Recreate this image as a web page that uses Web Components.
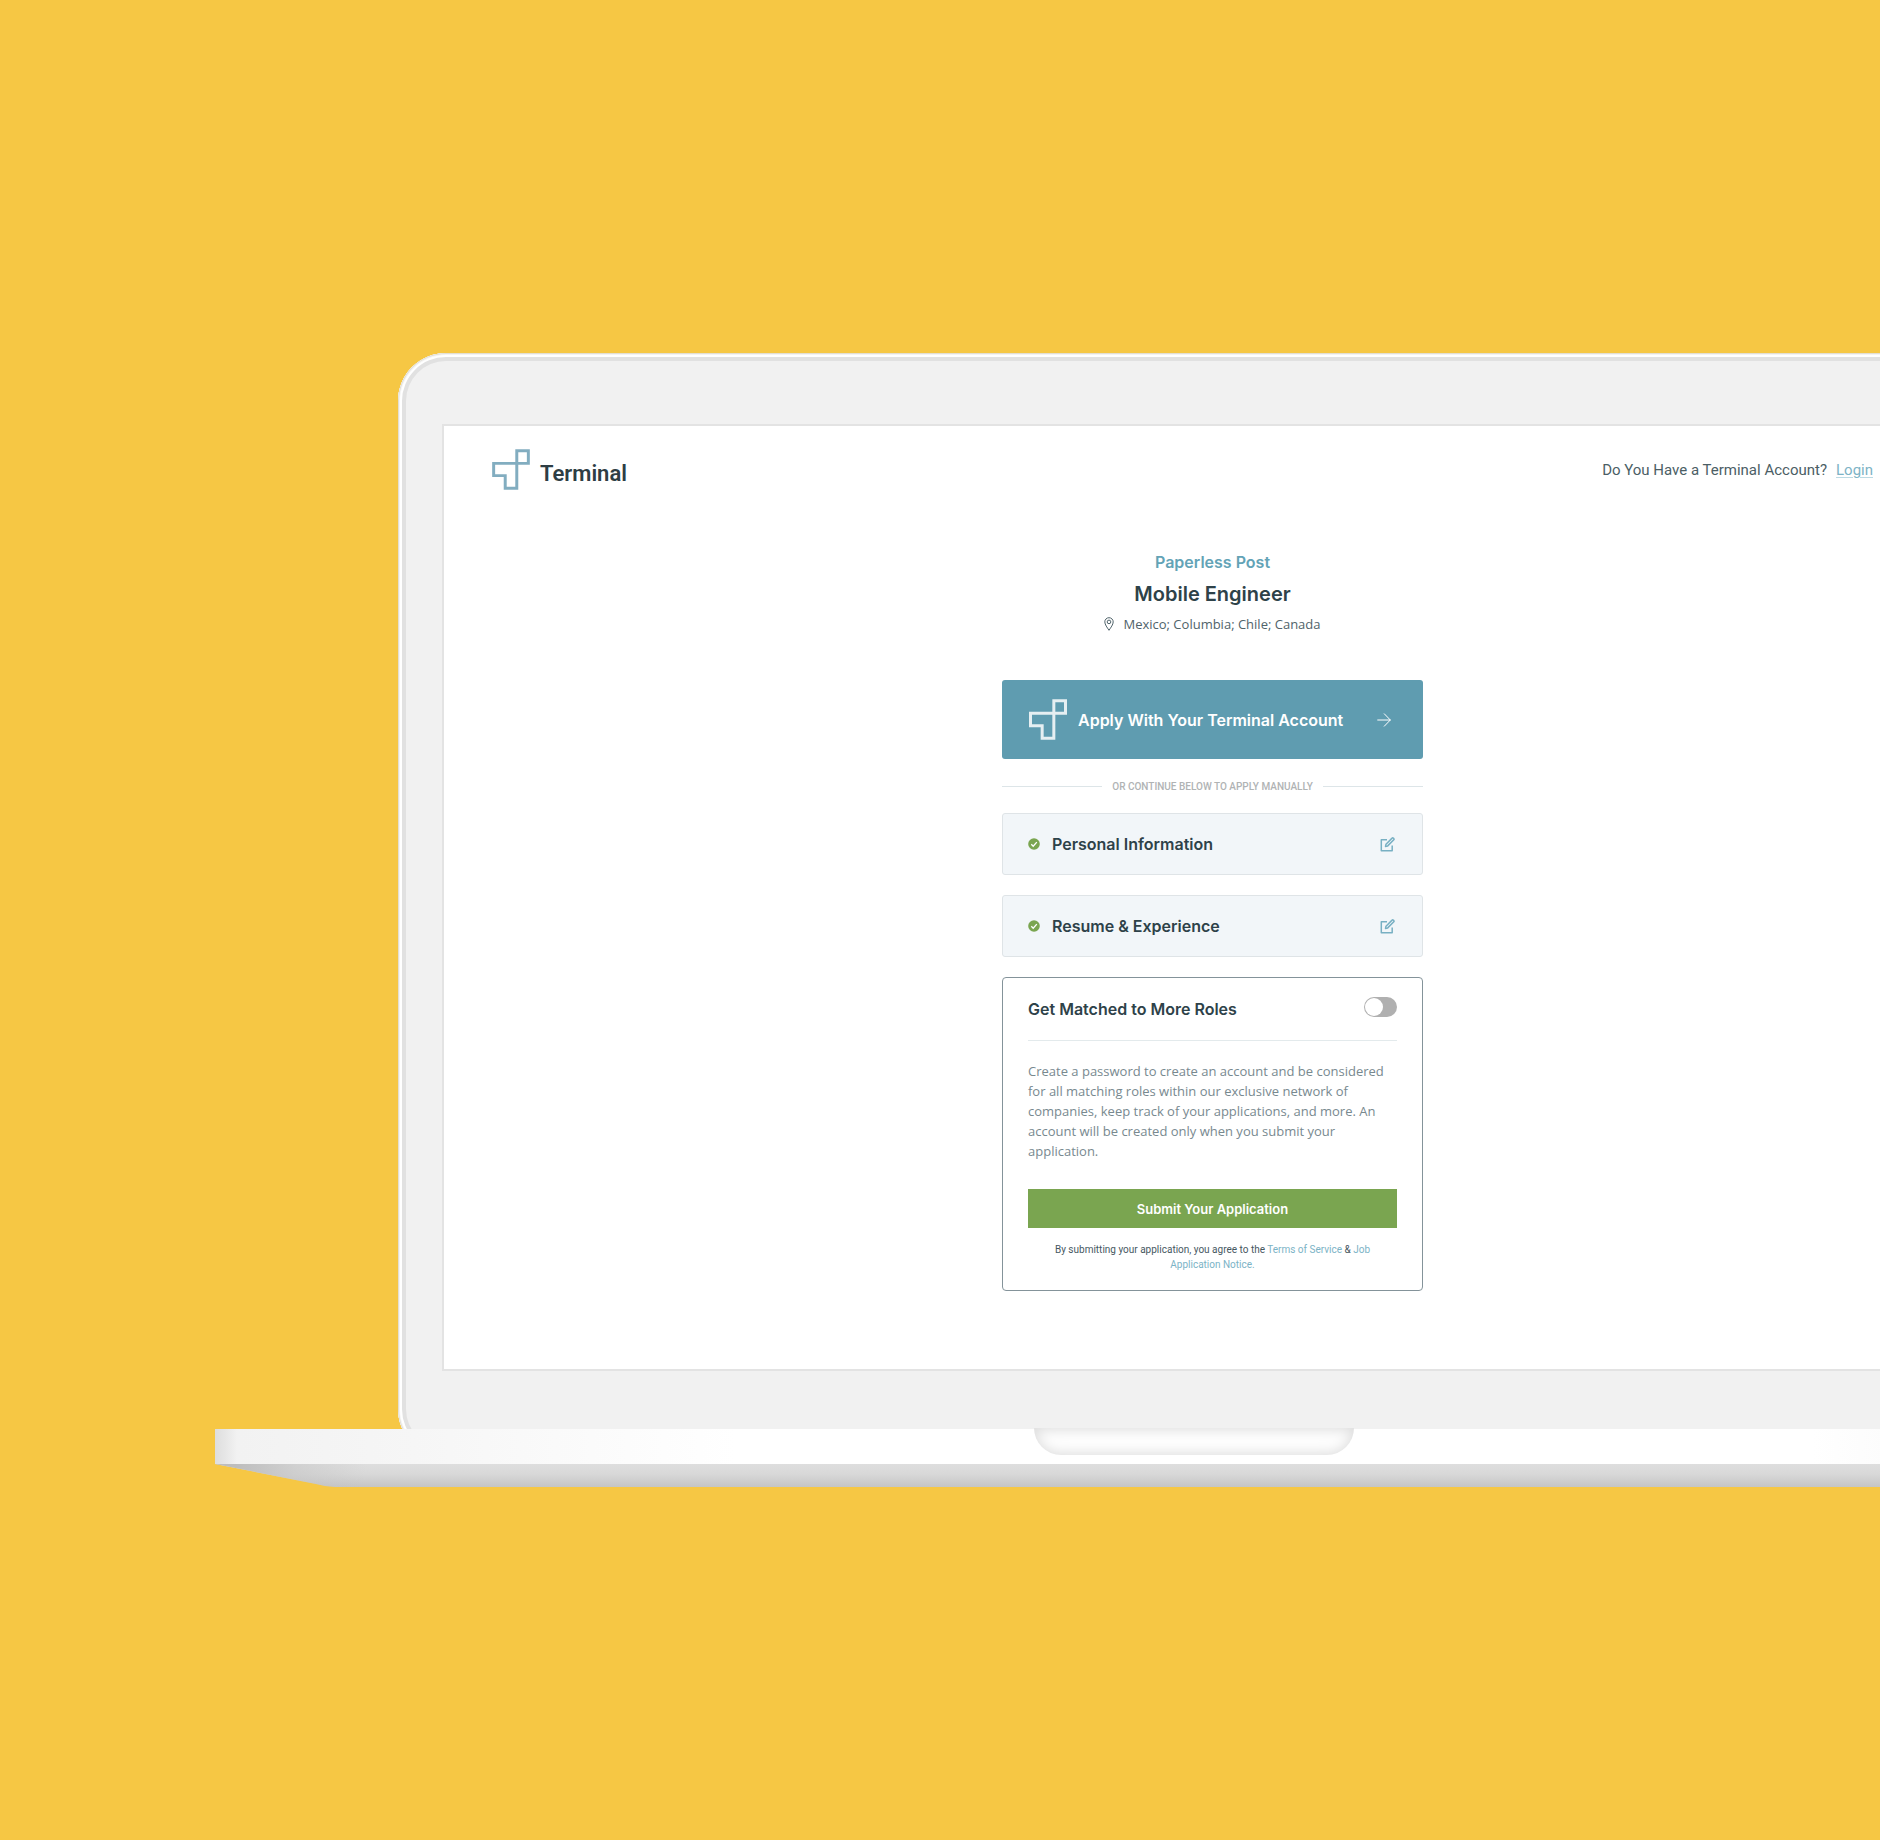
<!DOCTYPE html>
<html lang="en">
<head>
<meta charset="utf-8">
<title>Terminal</title>
<style>
body{margin:0;background:#f6c744}
</style>
</head>
<body>
<device-stage>
  <job-page>
    <brand-bar slot="header"></brand-bar>
    <job-heading company="Paperless Post" role-name="Mobile Engineer" places="Mexico; Columbia; Chile; Canada"></job-heading>
    <apply-button>Apply With Your Terminal Account</apply-button>
    <text-divider>OR CONTINUE BELOW TO APPLY MANUALLY</text-divider>
    <done-step label="Personal Information"></done-step>
    <done-step label="Resume &amp; Experience"></done-step>
    <match-card></match-card>
  </job-page>
</device-stage>
<script>
const define = (name, html, setup) => customElements.define(name, class extends HTMLElement {
  connectedCallback() {
    if (this.shadowRoot) return;
    this.attachShadow({mode: 'open'}).innerHTML = '<style>*{box-sizing:border-box}:host{display:block}</style>' + html;
    if (setup) setup(this, this.shadowRoot);
  }
});

define('terminal-mark', `
<style>:host{display:block;flex:none}svg{display:block;width:100%;height:100%}</style>
<svg viewBox="0 0 115 123" fill="none" stroke="currentColor" stroke-width="9" aria-hidden="true">
<path d="M75 5H110V43H75Z M75 43V118H40V80H5V43Z"/></svg>`);

define('device-stage', `
<style>
:host{min-height:100vh;display:flex;flex-direction:column;justify-content:center;overflow:hidden;background:#f6c744}
.laptop{margin:0 -293px 0 215px}
.lid{margin:0 183px -28px;padding:71px 44px 86px;border-radius:48px;background:#f1f1f1;
 box-shadow:inset 0 0 0 1px #e3dfd3,inset 0 0 0 2px #f4f4f4,inset 0 0 0 4px #fff,inset 0 0 0 8px #e1e1e1}
.screen{border:2px solid #e3e3e3;background:#fff;overflow:hidden}
.deck{position:relative;height:35px;display:flex;justify-content:center;align-items:flex-start;
 background:linear-gradient(90deg,#dedede 0,#e6e6e6 10px,#f2f2f2 22px,#f6f6f6 200px,#fff 520px,#fff calc(100% - 360px),#f1f1f1 calc(100% - 22px),#dedede 100%)}
.notch{width:320px;height:27px;margin-top:-1px;border-radius:0 0 28px 28px;background:#fff;box-shadow:inset 0 0 14px 2px #dcdcdc}
.under{height:23px;background:linear-gradient(100deg,#bdbdbd 20px,#c4c4c480 80px,#c4c4c400 150px),linear-gradient(#dedede,#d8d8d8 45%,#c5c5c5);
 clip-path:polygon(0 0,100% 0,calc(100% - 101px) 20px,calc(100% - 110px) 22px,calc(100% - 120px) 100%,120px 100%,110px 22px,101px 20px)}
</style>
<div class="laptop"><div class="lid"><div class="screen"><slot></slot></div></div>
<div class="deck"><div class="notch"></div></div><div class="under"></div></div>`);

define('job-page', `
<style>
:host{font-family:Inter,"Liberation Sans",sans-serif;color:#2e4249}
main{padding:52px 0 78px 37px;display:flex;justify-content:center}
.column{width:421px;display:flex;flex-direction:column}
</style>
<slot name="header"></slot><main><div class="column"><slot></slot></div></main>`);

define('brand-bar', `
<style>
header{display:flex;justify-content:space-between;padding:23px 71px 0 48px;font-family:Roboto,"Liberation Sans",sans-serif}
.brand{display:flex;gap:10px;color:#2e3d44;font-size:22px;font-weight:600;line-height:28px;text-decoration:none}
terminal-mark{width:38px;height:41px;color:#82adc0}
.brand span{padding-top:11px}
p{margin:0;display:flex;gap:9px;font-size:15px;line-height:20px;padding-top:11px;color:#4b5e65}
p a{color:#7db3c6;text-underline-offset:2px;text-decoration-color:#bcdae3}
</style>
<header><a class="brand" href="#home"><terminal-mark></terminal-mark><span>Terminal</span></a>
<p><span>Do You Have a Terminal Account?</span><a href="#login">Login</a></p></header>`);

define('job-heading', `
<style>
:host{text-align:center;padding-bottom:46px}
p,h1{margin:0}
.company{color:#63a3b6;font-size:16px;line-height:24px;font-weight:600;padding-top:8px}
h1{font-size:20px;line-height:28px;font-weight:600;padding-top:6px}
.places{display:flex;justify-content:center;align-items:center;gap:9px;font-family:"Open Sans",sans-serif;font-size:13px;line-height:20px;padding-top:6px;color:#50636a}
svg{width:10px;height:14px}
</style>
<p class="company"></p><h1></h1>
<p class="places"><svg viewBox="0 0 10 14" fill="none" stroke="currentColor" aria-hidden="true"><path d="M5 13.300C3.200 10.600.8 7.500.8 4.900a4.200 4.200 0 0 1 8.400 0c0 2.600-2.400 5.700-4.200 8.400Z"/><circle cx="5" cy="4.900" r="1.800"/></svg><span></span></p>`,
(el, root) => {
  root.querySelector('.company').textContent = el.getAttribute('company');
  root.querySelector('h1').textContent = el.getAttribute('role-name');
  root.querySelector('.places span').textContent = el.getAttribute('places');
});

define('apply-button', `
<style>
button{width:100%;height:79px;border:0;border-radius:3px;background:#5f9cb0;color:#fff;display:flex;align-items:center;gap:10px;padding:0 32px 0 26px;font:600 16px/24px Inter,"Liberation Sans",sans-serif}
terminal-mark{width:40px;height:41px;color:#e6eff2}
svg{width:14px;height:14px;margin-left:auto}
</style>
<button type="button"><terminal-mark></terminal-mark><slot></slot>
<svg viewBox="0 0 14 14" fill="none" stroke="currentColor" stroke-linecap="round" stroke-linejoin="round" aria-hidden="true"><path d="M.7 7H13.300M7.300.8 13.300 7l-6 6.200"/></svg></button>`);

define('text-divider', `
<style>
:host{display:flex;align-items:center;gap:10px;height:54px;color:#b0b3b4;font-family:Roboto,sans-serif;font-size:10px;font-weight:500;white-space:nowrap}
:host::before,:host::after{content:"";flex:1;height:1px;background:#dde5e8}
</style><slot></slot>`);

define('done-step', `
<style>
section{display:flex;align-items:center;height:62px;margin-bottom:20px;padding:0 27px 0 25px;border:1px solid #dfe4e7;border-radius:3px;background:#f2f6f9}
h2{margin:0 auto 0 12px;font-size:16px;line-height:24px;font-weight:600}
.done{width:12px;height:12px}
button{border:0;padding:0;background:none;color:#78b0c3;display:flex}
button svg{width:15px;height:15px}
</style>
<section><svg class="done" viewBox="0 0 12 12" aria-hidden="true"><circle cx="6" cy="6" r="5.800" fill="#7aa550"/><path d="M3.300 6.300 5.200 8.200 8.800 4.100" fill="none" stroke="#fff" stroke-width="1.300"/></svg>
<h2></h2>
<button type="button"><svg viewBox="0 0 15 15" fill="none" stroke="currentColor" stroke-width="1.500" stroke-linejoin="round" aria-hidden="true"><path d="M7 2.700H1.300V13.700H12.200V8.500M5.500 9.400 6 7.200 12.100 1.100a.8.8 0 0 1 1.200 0l.5.500a.8.8 0 0 1 0 1.200L7.700 8.900Z"/></svg></button></section>`,
(el, root) => {
  root.querySelector('h2').textContent = el.getAttribute('label');
  root.querySelector('button').setAttribute('aria-label', 'Edit');
});

define('match-card', `
<style>
section{border:1px solid #84939a;border-radius:4px;padding:19px 25px 18px}
.top{display:flex;justify-content:space-between;align-items:flex-start;height:44px;border-bottom:1px solid #e3eaec}
label{font-size:16px;line-height:24px;font-weight:600}
input{appearance:none;margin:0;width:33px;height:20px;border-radius:10px;background:#b0b0b0;padding:1px}
input::before{content:"";display:block;width:18px;height:18px;border-radius:50%;background:#fff}
input:checked::before{margin-left:13px}
p{margin:0}
.info{padding:20px 0 28px;font-family:"Open Sans",sans-serif;font-size:13px;line-height:20px;color:#78898f}
.submit{display:block;width:100%;height:39px;border:0;background:#7aa550;color:#fff;font:600 13px/20px Inter,"Liberation Sans",sans-serif}
.terms{padding-top:14px;font-family:Roboto,sans-serif;font-size:10px;line-height:15px;text-align:center;color:#46585f}
.terms a{color:#7bb3c6;text-decoration:none}
</style>
<section><div class="top"><label for="match">Get Matched to More Roles</label><input id="match" type="checkbox" role="switch"></div>
<p class="info">Create a password to create an account and be considered for all matching roles within our exclusive network of companies, keep track of your applications, and more. An account will be created only when you submit your application.</p>
<button class="submit" type="submit">Submit Your Application</button>
<p class="terms">By submitting your application, you agree to the <a href="#terms">Terms of Service</a> &amp; <a href="#notice">Job<br>Application Notice.</a></p></section>`);
</script>
</body>
</html>
